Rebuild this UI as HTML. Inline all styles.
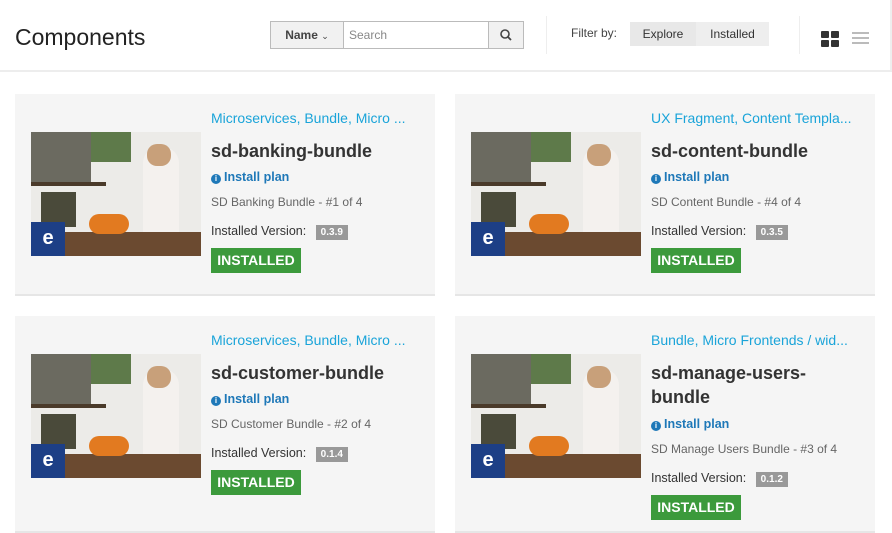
<!DOCTYPE html>
<html><head><style>
body{margin:0;width:892px;height:523px;overflow:hidden;background:#fff;font-family:"Liberation Sans",sans-serif;position:relative}
.hdr{position:absolute;left:0;top:0;width:890px;height:70px;border-bottom:2px solid #ededed;border-right:2px solid #eee}
.title{position:absolute;left:15px;top:24px;font-size:23px;color:#222}
.nm{position:absolute;left:270px;top:21px;width:74px;height:28px;border:1px solid #bbb;background:#f1f1f1;box-sizing:border-box;font-size:12px;font-weight:bold;color:#444;line-height:26px;text-align:center}
.srch{position:absolute;left:344px;top:21px;width:145px;height:28px;border:1px solid #bbb;border-left:none;box-sizing:border-box;font-size:12px;color:#888;line-height:26px;padding-left:5px}
.sb{position:absolute;left:488px;top:21px;width:36px;height:28px;border:1px solid #bbb;background:#f1f1f1;box-sizing:border-box}
.fl{position:absolute;left:571px;top:26px;font-size:12px;color:#444}
.tg{position:absolute;top:22px;height:24px;line-height:24px;font-size:12px;color:#333;background:#ececec;text-align:center}
.card{position:absolute;width:420px;background:#f5f5f5;border-bottom:2px solid #e6e6e6}
.img{position:absolute;left:16px;top:38px;width:170px;height:124px;background:#ecebe8;overflow:hidden}
.img div{position:absolute}
.cat{position:absolute;left:196px;top:16px;font-size:14px;color:#1aa4d9;white-space:nowrap}
.nmx{position:absolute;left:196px;top:45px;font-size:18px;font-weight:bold;color:#333;line-height:24px;width:210px}
.ip{position:absolute;left:196px;font-size:12.5px;font-weight:bold;color:#1e78b8}
.ip b{display:inline-block;width:10px;height:10px;border-radius:50%;background:#1e78b8;color:#fff;font-size:8px;text-align:center;line-height:10px;vertical-align:0px;margin-right:3px}
.ds{position:absolute;left:196px;font-size:12px;color:#666}
.iv{position:absolute;left:196px;font-size:12.5px;color:#333}
.iv span{display:inline-block;background:#999;color:#fff;font-size:10px;font-weight:bold;padding:2px 5px;margin-left:6px}
.ok{position:absolute;left:196px;width:90px;height:25px;background:#3c9a3c;color:#fff;font-weight:bold;font-size:14px;line-height:25px;text-align:center}
</style></head><body>
<div class="hdr">
<div class="title">Components</div>
<div class="nm">Name <span style="font-weight:normal;font-size:9px">&#8964;</span></div>
<div class="srch">Search</div>
<div class="sb"><svg width="34" height="26"><circle cx="16" cy="12" r="4" fill="none" stroke="#444" stroke-width="1.6"/><line x1="19" y1="15" x2="22" y2="18" stroke="#444" stroke-width="1.8"/></svg></div>
<div style="position:absolute;left:546px;top:16px;width:1px;height:38px;background:#eee"></div>
<div class="fl">Filter by:</div>
<div class="tg" style="left:630px;width:66px;background:#e8e8e8;">Explore</div>
<div class="tg" style="left:696px;width:73px;background:#eeeeee">Installed</div>
<div style="position:absolute;left:799px;top:16px;width:1px;height:38px;background:#eee"></div>
<div style="position:absolute;left:821px;top:31px;width:8px;height:7px;background:#333;box-shadow:10px 0 #333,0 9px #333,10px 9px #333;border-radius:1px"></div>
<div style="position:absolute;left:852px;top:32px;width:17px;height:2px;background:#bbb;box-shadow:0 5px #bbb,0 10px #bbb"></div>
</div>

<div class="card" style="left:15px;top:94px;height:200px">
<div class="img"><div style="left:0;top:0;width:60px;height:50px;background:#6b6a60"></div><div style="left:0;top:50px;width:75px;height:4px;background:#4a3a2a"></div><div style="left:60px;top:0;width:40px;height:30px;background:#5e7a4a"></div><div style="left:112px;top:15px;width:36px;height:90px;background:#f4f1ee;border-radius:16px 16px 0 0"></div><div style="left:116px;top:12px;width:24px;height:22px;background:#c8a07a;border-radius:10px"></div><div style="left:0;top:100px;width:170px;height:24px;background:#6b4a30"></div><div style="left:58px;top:82px;width:40px;height:20px;background:#e27a20;border-radius:10px"></div><div style="left:10px;top:60px;width:35px;height:35px;background:#4a4a3a"></div><div style="left:0;top:90px;width:34px;height:34px;background:#1d3f86;color:#fff;font-size:20px;font-weight:bold;text-align:center;line-height:32px">e</div></div>
<div class="cat">Microservices, Bundle, Micro ...</div>
<div class="nmx">sd-banking-bundle</div>
<div class="ip" style="top:76px"><b>i</b>Install plan</div>
<div class="ds" style="top:101px">SD Banking Bundle - #1 of 4</div>
<div class="iv" style="top:130px">Installed Version: <span>0.3.9</span></div>
<div class="ok" style="top:154px">INSTALLED</div>
</div>

<div class="card" style="left:455px;top:94px;height:200px">
<div class="img"><div style="left:0;top:0;width:60px;height:50px;background:#6b6a60"></div><div style="left:0;top:50px;width:75px;height:4px;background:#4a3a2a"></div><div style="left:60px;top:0;width:40px;height:30px;background:#5e7a4a"></div><div style="left:112px;top:15px;width:36px;height:90px;background:#f4f1ee;border-radius:16px 16px 0 0"></div><div style="left:116px;top:12px;width:24px;height:22px;background:#c8a07a;border-radius:10px"></div><div style="left:0;top:100px;width:170px;height:24px;background:#6b4a30"></div><div style="left:58px;top:82px;width:40px;height:20px;background:#e27a20;border-radius:10px"></div><div style="left:10px;top:60px;width:35px;height:35px;background:#4a4a3a"></div><div style="left:0;top:90px;width:34px;height:34px;background:#1d3f86;color:#fff;font-size:20px;font-weight:bold;text-align:center;line-height:32px">e</div></div>
<div class="cat">UX Fragment, Content Templa...</div>
<div class="nmx">sd-content-bundle</div>
<div class="ip" style="top:76px"><b>i</b>Install plan</div>
<div class="ds" style="top:101px">SD Content Bundle - #4 of 4</div>
<div class="iv" style="top:130px">Installed Version: <span>0.3.5</span></div>
<div class="ok" style="top:154px">INSTALLED</div>
</div>

<div class="card" style="left:15px;top:316px;height:215px">
<div class="img"><div style="left:0;top:0;width:60px;height:50px;background:#6b6a60"></div><div style="left:0;top:50px;width:75px;height:4px;background:#4a3a2a"></div><div style="left:60px;top:0;width:40px;height:30px;background:#5e7a4a"></div><div style="left:112px;top:15px;width:36px;height:90px;background:#f4f1ee;border-radius:16px 16px 0 0"></div><div style="left:116px;top:12px;width:24px;height:22px;background:#c8a07a;border-radius:10px"></div><div style="left:0;top:100px;width:170px;height:24px;background:#6b4a30"></div><div style="left:58px;top:82px;width:40px;height:20px;background:#e27a20;border-radius:10px"></div><div style="left:10px;top:60px;width:35px;height:35px;background:#4a4a3a"></div><div style="left:0;top:90px;width:34px;height:34px;background:#1d3f86;color:#fff;font-size:20px;font-weight:bold;text-align:center;line-height:32px">e</div></div>
<div class="cat">Microservices, Bundle, Micro ...</div>
<div class="nmx">sd-customer-bundle</div>
<div class="ip" style="top:76px"><b>i</b>Install plan</div>
<div class="ds" style="top:101px">SD Customer Bundle - #2 of 4</div>
<div class="iv" style="top:130px">Installed Version: <span>0.1.4</span></div>
<div class="ok" style="top:154px">INSTALLED</div>
</div>

<div class="card" style="left:455px;top:316px;height:215px">
<div class="img"><div style="left:0;top:0;width:60px;height:50px;background:#6b6a60"></div><div style="left:0;top:50px;width:75px;height:4px;background:#4a3a2a"></div><div style="left:60px;top:0;width:40px;height:30px;background:#5e7a4a"></div><div style="left:112px;top:15px;width:36px;height:90px;background:#f4f1ee;border-radius:16px 16px 0 0"></div><div style="left:116px;top:12px;width:24px;height:22px;background:#c8a07a;border-radius:10px"></div><div style="left:0;top:100px;width:170px;height:24px;background:#6b4a30"></div><div style="left:58px;top:82px;width:40px;height:20px;background:#e27a20;border-radius:10px"></div><div style="left:10px;top:60px;width:35px;height:35px;background:#4a4a3a"></div><div style="left:0;top:90px;width:34px;height:34px;background:#1d3f86;color:#fff;font-size:20px;font-weight:bold;text-align:center;line-height:32px">e</div></div>
<div class="cat">Bundle, Micro Frontends / wid...</div>
<div class="nmx">sd-manage-users-bundle</div>
<div class="ip" style="top:101px"><b>i</b>Install plan</div>
<div class="ds" style="top:126px">SD Manage Users Bundle - #3 of 4</div>
<div class="iv" style="top:155px">Installed Version: <span>0.1.2</span></div>
<div class="ok" style="top:179px">INSTALLED</div>
</div>
</body></html>
